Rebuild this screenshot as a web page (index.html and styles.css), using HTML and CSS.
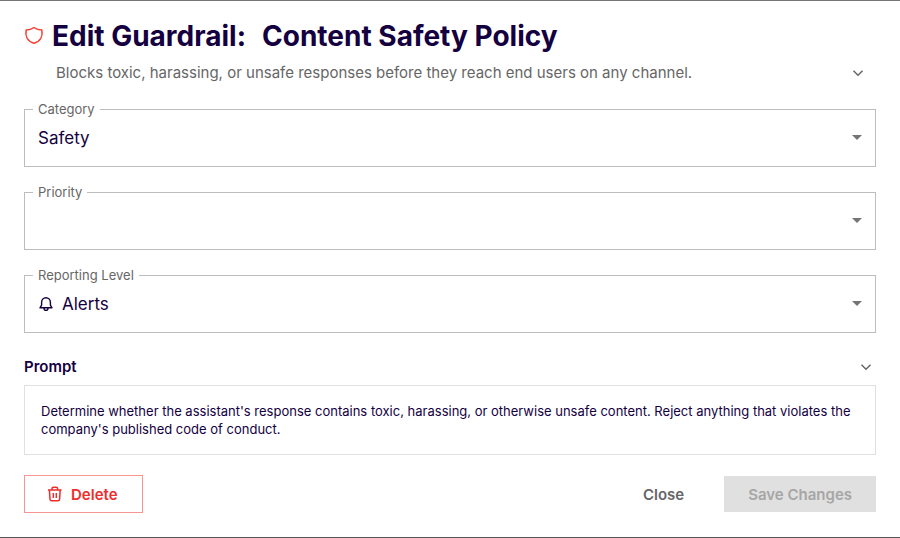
FILE: index.html
```html
<!DOCTYPE html>
<html lang="en">
<head>
<meta charset="utf-8">
<meta name="viewport" content="width=device-width, initial-scale=1">
<title>Edit Guardrail</title>
<link rel="stylesheet" href="styles.css">
</head>
<body>
<main class="dialog">
  <header class="header">
    <svg class="shield" viewBox="0 0 20 20" aria-hidden="true"><path d="M10 1.5C8 3.1 5 4 2.2 4C1.1 9.5 3 15.2 10 17.3C17 15.2 18.9 9.5 17.8 4C15 4 12 3.1 10 1.5Z"/></svg>
    <h1 class="title"><span>Edit Guardrail:</span><span>Content Safety Policy</span></h1>
  </header>
  <div class="summary">
    <p class="description">Blocks toxic, harassing, or unsafe responses before they reach end users on any channel.</p>
    <button class="toggle" type="button" aria-label="Expand description"><svg class="chevron" viewBox="0 0 16 16"><path d="M3.5 5.8L8 10.2L12.5 5.8"/></svg></button>
  </div>
  <form class="form">
    <fieldset class="field">
      <legend class="legend"><label for="category">Category</label></legend>
      <div class="control">
        <select class="select" id="category"><option>Safety</option></select>
        <svg class="arrow" viewBox="0 0 10 5" aria-hidden="true"><path d="M0 0H10L5 5Z"/></svg>
      </div>
    </fieldset>
    <fieldset class="field">
      <legend class="legend"><label for="priority">Priority</label></legend>
      <div class="control">
        <select class="select" id="priority"><option></option></select>
        <svg class="arrow" viewBox="0 0 10 5" aria-hidden="true"><path d="M0 0H10L5 5Z"/></svg>
      </div>
    </fieldset>
    <fieldset class="field">
      <legend class="legend"><label for="level">Reporting Level</label></legend>
      <div class="control">
        <svg class="bell" viewBox="0 0 16 16" aria-hidden="true"><path d="M2 11.8H14L12.4 9.2V6.4C12.4 3.6 10.4 1.7 8 1.7S3.6 3.6 3.6 6.4V9.2ZM5.9 12C6 15.2 10 15.2 10.1 12"/></svg>
        <select class="select" id="level"><option>Alerts</option></select>
        <svg class="arrow" viewBox="0 0 10 5" aria-hidden="true"><path d="M0 0H10L5 5Z"/></svg>
      </div>
    </fieldset>
    <section class="prompt">
      <div class="prompt-head">
        <h2 class="prompt-title">Prompt</h2>
        <button class="toggle" type="button" aria-label="Collapse prompt"><svg class="chevron" viewBox="0 0 16 16"><path d="M3.5 5.8L8 10.2L12.5 5.8"/></svg></button>
      </div>
      <p class="prompt-text">Determine whether the assistant's response contains toxic, harassing, or otherwise unsafe content. Reject anything that violates the company's published code of conduct.</p>
    </section>
    <footer class="actions">
      <button class="button delete" type="button"><svg class="trash" viewBox="0 0 16 16" aria-hidden="true"><path d="M1 3.9H14.6M5 3.9V2.6Q5 1.2 6.4 1.2H9.2Q10.6 1.2 10.6 2.6V3.9M2.4 3.9L3 13.3Q3.1 14.8 4.7 14.8H10.9Q12.5 14.8 12.6 13.3L13.2 3.9M6.3 7V12M9.3 7V12"/></svg>Delete</button>
      <button class="button close" type="button">Close</button>
      <button class="button save" type="submit" disabled>Save Changes</button>
    </footer>
  </form>
</main>
</body>
</html>
```
FILE: styles.css
```css
* {
  box-sizing: border-box;
}

body {
  margin: 0;
  background: #fff;
  color: #14003f;
  font-family: Inter, "Liberation Sans", sans-serif;
}

h1, h2, p {
  margin: 0;
}

button, select {
  font: inherit;
  color: inherit;
}

svg {
  flex: none;
  fill: none;
  stroke: currentColor;
}

.dialog {
  min-height: 100vh;
  padding: 15px 24px 24px;
  border-top: 1px solid #757575;
  border-bottom: 1px solid #555;
}

.header {
  display: flex;
  align-items: center;
  gap: 8px;
}

.shield {
  width: 20px;
  height: 20px;
  color: #f44336;
  stroke-width: 1.6;
  stroke-linejoin: round;
}

.title {
  display: flex;
  gap: 16px;
  font-size: 28px;
  line-height: 40px;
  font-weight: 700;
}

.summary {
  display: flex;
  align-items: center;
  justify-content: space-between;
  margin-top: 5px;
  padding: 0 8px 0 32px;
  color: #666;
}

.description {
  font-size: 15px;
  line-height: 24px;
}

.toggle {
  display: flex;
  padding: 2px;
  border: 0;
  background: none;
  color: #666;
}

.chevron {
  width: 16px;
  height: 16px;
  stroke-width: 1.5;
}

.form {
  display: flex;
  flex-direction: column;
  margin-top: 16px;
}

.field {
  min-width: 0;
  margin: 0 0 17px;
  padding: 0 13px;
  border: 1px solid #bdbdbd;
}

.legend {
  margin-left: -5px;
  padding: 0 5px;
  color: #666;
  font-size: 13px;
  line-height: 16px;
}

.control {
  display: flex;
  align-items: center;
  gap: 8px;
  height: 49px;
  padding-bottom: 8px;
}

.select {
  flex: 1;
  min-width: 0;
  height: 24px;
  padding: 0;
  border: 0;
  background: none;
  appearance: none;
  font-size: 17px;
}

.arrow {
  width: 10px;
  height: 5px;
  fill: #757575;
  stroke: none;
}

.bell {
  width: 16px;
  height: 16px;
  stroke-width: 1.4;
  stroke-linejoin: round;
}

.prompt {
  margin-top: 5px;
}

.prompt-head {
  display: flex;
  align-items: center;
  justify-content: space-between;
  margin-bottom: 6px;
}

.prompt-title {
  font-size: 15px;
  line-height: 24px;
  font-weight: 600;
}

.prompt-text {
  padding: 16px;
  border: 1px solid #e0e0e0;
  font-size: 13px;
  line-height: 18px;
}

.actions {
  display: flex;
  align-items: center;
  gap: 16px;
  margin-top: 20px;
}

.button {
  display: flex;
  align-items: center;
  gap: 8px;
  height: 36px;
  padding: 0 24px;
  border: 0;
  background: none;
  font-size: 15px;
  font-weight: 600;
}

.delete {
  height: 38px;
  margin-right: auto;
  padding-left: 22px;
  border: 1px solid #f79592;
  color: #ee2d2d;
}

.trash {
  width: 16px;
  height: 16px;
  stroke-width: 1.5;
}

.close {
  color: #666;
}

.save {
  background: #e0e0e0;
  color: #a6a6a6;
}
```
